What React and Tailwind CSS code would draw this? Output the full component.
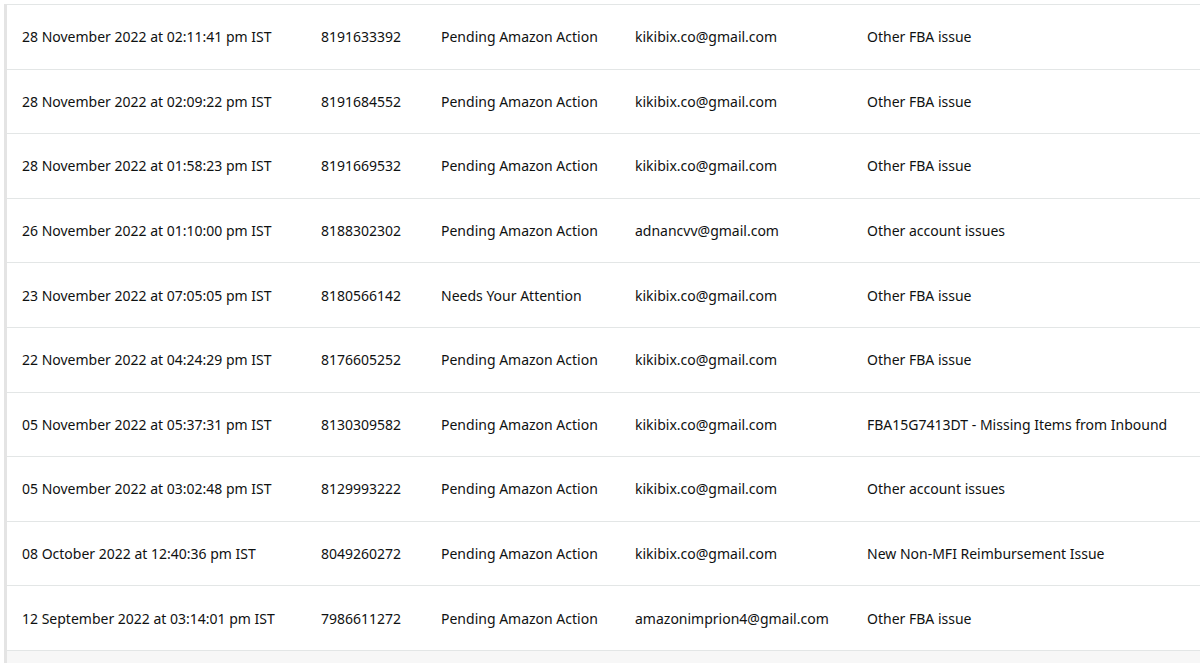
// App.jsx
// Case log table — list of support cases with date, ID, status, account and subject.

const CASES = [
  { date: '28 November 2022 at 02:11:41 pm IST', id: '8191633392', status: 'Pending Amazon Action', email: 'kikibix.co@gmail.com', subject: 'Other FBA issue' },
  { date: '28 November 2022 at 02:09:22 pm IST', id: '8191684552', status: 'Pending Amazon Action', email: 'kikibix.co@gmail.com', subject: 'Other FBA issue' },
  { date: '28 November 2022 at 01:58:23 pm IST', id: '8191669532', status: 'Pending Amazon Action', email: 'kikibix.co@gmail.com', subject: 'Other FBA issue' },
  { date: '26 November 2022 at 01:10:00 pm IST', id: '8188302302', status: 'Pending Amazon Action', email: 'adnancvv@gmail.com', subject: 'Other account issues' },
  { date: '23 November 2022 at 07:05:05 pm IST', id: '8180566142', status: 'Needs Your Attention', email: 'kikibix.co@gmail.com', subject: 'Other FBA issue' },
  { date: '22 November 2022 at 04:24:29 pm IST', id: '8176605252', status: 'Pending Amazon Action', email: 'kikibix.co@gmail.com', subject: 'Other FBA issue' },
  { date: '05 November 2022 at 05:37:31 pm IST', id: '8130309582', status: 'Pending Amazon Action', email: 'kikibix.co@gmail.com', subject: 'FBA15G7413DT - Missing Items from Inbound' },
  { date: '05 November 2022 at 03:02:48 pm IST', id: '8129993222', status: 'Pending Amazon Action', email: 'kikibix.co@gmail.com', subject: 'Other account issues' },
  { date: '08 October 2022 at 12:40:36 pm IST', id: '8049260272', status: 'Pending Amazon Action', email: 'kikibix.co@gmail.com', subject: 'New Non-MFI Reimbursement Issue' },
  { date: '12 September 2022 at 03:14:01 pm IST', id: '7986611272', status: 'Pending Amazon Action', email: 'amazonimprion4@gmail.com', subject: 'Other FBA issue' },
]

function CaseRow({ row }) {
  return (
    <div className="flex h-[64.6px] items-center border-b border-[#e3e6e6] text-[14px] text-[#0f1111]">
      <div className="w-[314px] shrink-0 pl-[15px]">{row.date}</div>
      <div className="w-[120px] shrink-0">{row.id}</div>
      <div className="w-[194px] shrink-0">{row.status}</div>
      <div className="w-[232px] shrink-0">{row.email}</div>
      <div className="flex-1 whitespace-nowrap">{row.subject}</div>
    </div>
  )
}

export default function App() {
  return (
    <div className="h-[663px] overflow-hidden bg-white pt-[4px] pl-[4px] font-['Noto_Sans',sans-serif]">
      <div className="flex h-full flex-col border-l-[3px] border-[#e4e4e4]">
        <div className="border-t border-[#e3e6e6]" />
        {CASES.map((row) => (
          <CaseRow key={row.id} row={row} />
        ))}
        <div className="flex-1 bg-[#f7f7f7]" />
      </div>
    </div>
  )
}
